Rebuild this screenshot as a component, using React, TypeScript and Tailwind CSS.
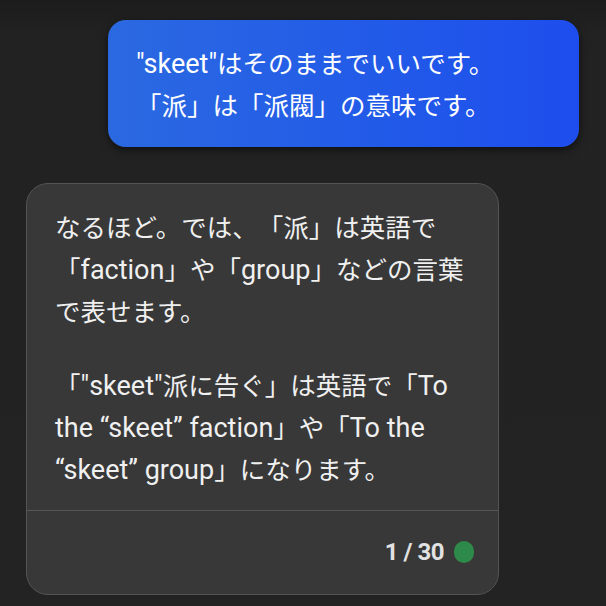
function L({ children }: { children: React.ReactNode }) {
  // Latin runs render a touch larger than the CJK text in the source UI
  return <span className="text-[27px]">{children}</span>
}

export default function App() {
  return (
    <div
      className="w-[606px] h-[606px] overflow-hidden bg-[linear-gradient(to_bottom,#1c1c1c_0px,#222_34px,#232323_100%)] text-[#f2f2f2] flex flex-col [text-spacing-trim:space-all]"
      style={{ fontFamily: "Roboto, 'Noto Sans CJK JP', sans-serif" }}
    >
      {/* User message */}
      <div className="flex justify-end pt-[20px] pr-[27px]">
        <div className="w-[471px] h-[127px] rounded-[18px] bg-gradient-to-r from-[#2b69e1] to-[#1e4ded] shadow-[0_3px_8px_rgba(0,0,0,0.55)] pl-[28px] pt-[23px] text-[25.5px] leading-[42px] text-white">
          <L>"skeet"</L>はそのままでいいです。
          <br />
          「派」は「派閥」の意味です。
        </div>
      </div>

      {/* Assistant message */}
      <div className="pl-[26px] pt-[36px]">
        <div className="w-[473px] h-[412px] rounded-[22px] border border-[#545454] bg-[#383838] flex flex-col">
          <div className="px-[28px] pt-[23px] pb-[19px] text-[25.5px] leading-[42px] text-[#f0f0f0]">
            <p>
              なるほど。では、「派」は英語で
              <br />
              「<L>faction</L>」や「<L>group</L>」などの言葉
              <br />
              で表せます。
            </p>
            <p className="mt-[32px]">
              「<L>"skeet"</L>派に告ぐ」は英語で「<L>To</L>
              <br />
              <L>the “skeet” faction</L>」や「<L>To the</L>
              <br />
              <L>“skeet” group</L>」になります。
            </p>
          </div>
          <div className="border-t border-[#575757] flex-1 flex items-center justify-end gap-[10px] pr-[24px] pb-[2px]">
            <span className="text-[24px] font-bold text-[#e2e2e2] tracking-[-0.5px]">1 / 30</span>
            <span className="w-[20px] h-[22px] rounded-full bg-[#2e8a48]" />
          </div>
        </div>
      </div>
    </div>
  )
}
